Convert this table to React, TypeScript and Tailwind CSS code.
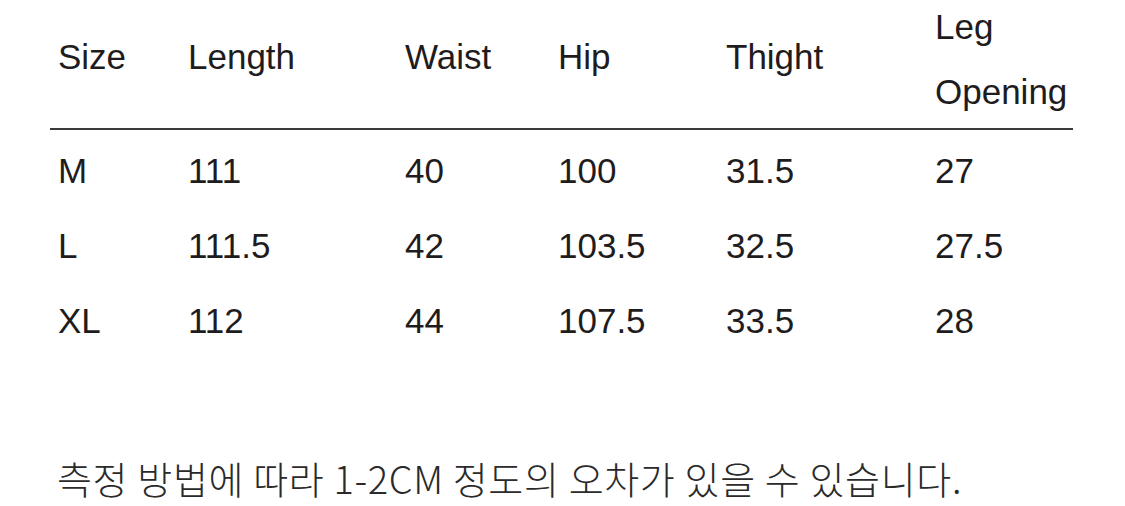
import React from "react";

const cols = "grid grid-cols-[130px_217px_153px_168px_209px_146px]";

const rows = [
  ["M", "111", "40", "100", "31.5", "27"],
  ["L", "111.5", "42", "103.5", "32.5", "27.5"],
  ["XL", "112", "44", "107.5", "33.5", "28"],
];

export default function App() {
  return (
    <div className="w-[1125px] h-[506px] bg-white text-[#1f1c1d] overflow-hidden relative">
      <div className="pl-[50px] pt-[7px] font-['Liberation_Sans',Arial,sans-serif] text-[35px] leading-[40px]">
        <div className={`${cols} w-[1023px]`}>
          <div className="pl-[8px] pt-[30px]">Size</div>
          <div className="pl-[8px] pt-[30px]">Length</div>
          <div className="pl-[8px] pt-[30px]">Waist</div>
          <div className="pl-[8px] pt-[30px]">Hip</div>
          <div className="pl-[8px] pt-[30px]">Thight</div>
          <div className="pl-[8px] flex flex-col gap-[25px]">
            <span>Leg</span>
            <span>Opening</span>
          </div>
        </div>
        <div className="mt-[16px] h-[2px] w-[1023px] bg-[#3a3a3a]" />
        <div className="mt-[21px] flex flex-col gap-[35px]">
          {rows.map((r) => (
            <div key={r[0]} className={`${cols} w-[1023px]`}>
              {r.map((c, i) => (
                <div key={i} className="pl-[8px]">
                  {c}
                </div>
              ))}
            </div>
          ))}
        </div>
      </div>
      <div className="absolute left-[57px] top-[453px] font-['Noto_Sans_CJK_KR','Noto_Sans',sans-serif] font-light text-[38px] tracking-[0.65px] leading-[50px] text-[#2a2a2a] whitespace-nowrap">
        측정 방법에 따라 1-2CM 정도의 오차가 있을 수 있습니다.
      </div>
    </div>
  );
}
